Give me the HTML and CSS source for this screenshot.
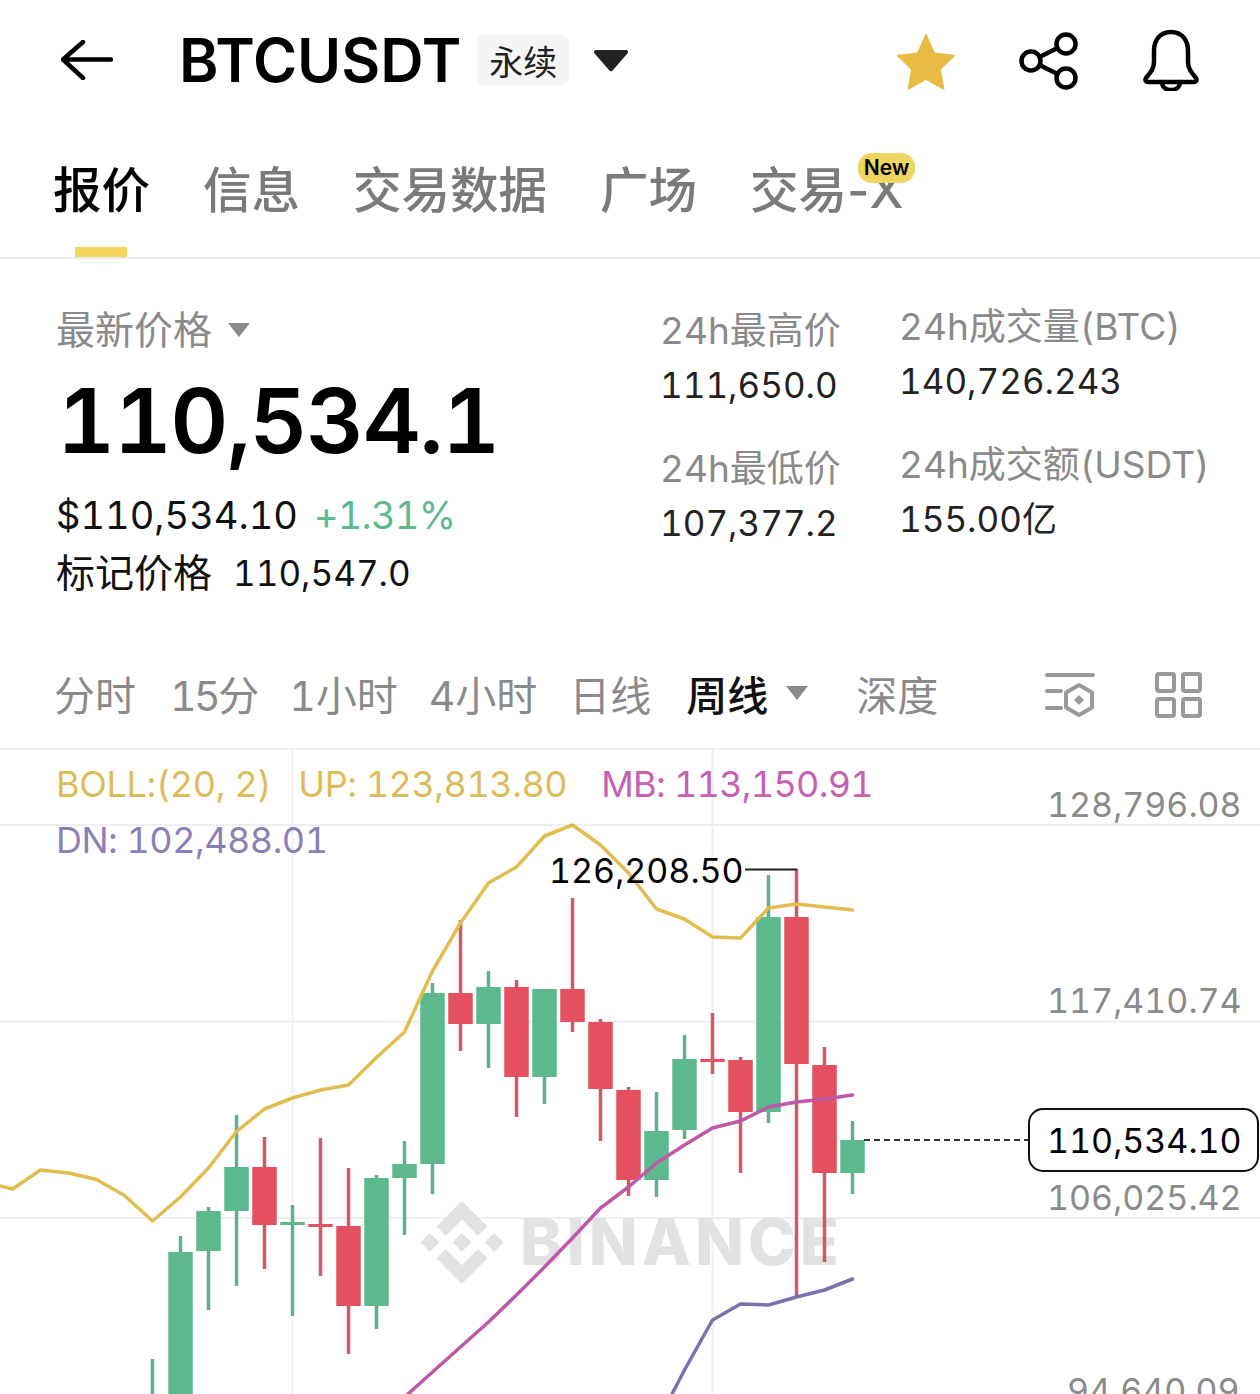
FILE: index.html
```html
<!DOCTYPE html>
<html lang="zh">
<head>
<meta charset="utf-8">
<title>BTCUSDT</title>
<link rel="stylesheet" href="styles.css">
</head>
<body>
<div class="page">
  <header class="topbar">
    <svg class="icon-back" viewBox="0 0 52 40"><path d="M50 19.5H3M22 2 2 19.5 22 38"/></svg>
    <h1 class="symbol">BTCUSDT</h1>
    <span class="tag">永续</span>
    <svg class="caret-big" viewBox="0 0 36 24"><path d="M3 2h30a2 2 0 0 1 1.6 3.2L19.6 22.6a2 2 0 0 1-3.2 0L1.4 5.2A2 2 0 0 1 3 2z"/></svg>
    <div class="top-actions">
      <svg class="icon-star" viewBox="0 0 60 57"><path d="M30 1 38.5 20 59 22.5 44.5 36.5 48 56.5 30 46.500 12 56.500 15.500 36.500 1 22.500 21.500 20z"/></svg>
      <svg class="icon-line icon-share" viewBox="0 0 60 60"><circle cx="12" cy="31" r="9.500"/><circle cx="47" cy="14" r="9.500"/><circle cx="47" cy="48" r="9.500"/><path d="M20.500 27 38.500 18M20.500 35 38.500 44"/></svg>
      <svg class="icon-line icon-bell" viewBox="0 0 58 62"><path d="M29 3C18 3 12 11 12 22v11c0 6-3 10-8 16-1.500 2-.5 4 2 4h46c2.500 0 3.500-2 2-4-5-6-8-10-8-16V22C46 11 40 3 29 3z"/><path d="M20 53c0 5 4 8 9 8s9-3 9-8"/></svg>
    </div>
  </header>

  <nav class="tabs">
    <a class="tab tab-active">报价</a>
    <a class="tab">信息</a>
    <a class="tab">交易数据</a>
    <a class="tab">广场</a>
    <a class="tab tab-new">交易-X<span class="badge">New</span></a>
  </nav>

  <section class="stats">
    <div class="price-col">
      <div class="price-label">最新价格<svg class="caret-small" viewBox="0 0 24 16"><path d="M1 1h22L12 15z"/></svg></div>
      <div class="price-main">110,534.1</div>
      <div class="price-sub"><span>$110,534.10</span><span class="up">+1.31%</span></div>
      <div class="price-mark"><span>标记价格</span><span class="mark-v">110,547.0</span></div>
    </div>
    <div class="stat-col stat-col-a">
      <div class="stat"><div class="stat-k">24h最高价</div><div class="stat-v">111,650.0</div></div>
      <div class="stat"><div class="stat-k">24h最低价</div><div class="stat-v">107,377.2</div></div>
    </div>
    <div class="stat-col stat-col-b">
      <div class="stat"><div class="stat-k">24h成交量(BTC)</div><div class="stat-v">140,726.243</div></div>
      <div class="stat"><div class="stat-k">24h成交额(USDT)</div><div class="stat-v">155.00亿</div></div>
    </div>
  </section>

  <nav class="periods">
    <a class="period p1">分时</a>
    <a class="period p2">15分</a>
    <a class="period p3">1小时</a>
    <a class="period p4">4小时</a>
    <a class="period p5">日线</a>
    <a class="period period-active">周线<svg class="caret-small" viewBox="0 0 24 16"><path d="M1 1h22L12 15z"/></svg></a>
    <a class="period p7">深度</a>
    <div class="period-tools">
      <svg class="tool tool-a" viewBox="0 0 50 46"><path d="M2 3h46M2 19h14M2 36h14"/><path d="M34 13 47 20.500V35.500L34 43 21 35.500V20.500z"/><path class="tool-fill" d="M34 23 39 28 34 33 29 28z"/></svg>
      <svg class="tool tool-b" viewBox="0 0 48 46"><rect x="2" y="2" width="17" height="17" rx="2"/><rect x="28" y="2" width="17" height="17" rx="2"/><rect x="2" y="27" width="17" height="17" rx="2"/><rect x="28" y="27" width="17" height="17" rx="2"/></svg>
    </div>
  </nav>

  <section class="chart">
    <svg class="chart-svg" viewBox="0 750 1260 644">
      <g class="grid">
        <path d="M0 825H1260M0 1021.500H1260M0 1218H1260M292.500 750V1394M712.500 750V1394"/>
      </g>
      <g class="watermark">
        <path transform="translate(420.500 1201) scale(3.46)" d="M16.624 13.9202l2.7175 2.7154-7.353 7.353-7.353-7.352 2.7175-2.7164 4.6355 4.6595 4.6356-4.6595zm4.6366-4.6366L24 12l-2.7154 2.7164L18.5682 12l2.6924-2.7164zm-9.272.001l2.7163 2.6914-2.7164 2.7174v-.001L9.2721 12l2.7164-2.7154zm-9.2722-.001L5.4088 12l-2.6914 2.6934L0 12l2.7164-2.7164zM11.9885.0115l7.353 7.329-2.7174 2.7154-4.6356-4.6356-4.6355 4.6595-2.7174-2.7154 7.353-7.353z"/>
        <text x="520" y="1265" class="wm-text">BINANCE</text>
      </g>
      <g class="wick-g">
        <path d="M152.500 1359V1394M180.500 1236V1394M208.500 1207V1310M236.500 1115V1286M292.500 1205V1316M376.500 1175V1329M404.500 1141V1235M432.500 983V1194M488.500 971V1068M544.500 989V1104M656.500 1092V1197M684.500 1035V1139M768.500 875V1123M852.500 1121V1194"/>
      </g>
      <g class="wick-r">
        <path d="M264.500 1137V1269M320.500 1138V1276M348.500 1168V1354M460.500 920V1051M516.500 980V1117M572.500 898V1032M600.500 1019V1141M628.500 1087V1196M712.500 1013V1074M740.500 1057V1173M796.500 869V1296M824.500 1047V1262"/>
      </g>
      <g class="body-g">
        <rect x="168.250" y="1252" width="24.500" height="142"/>
        <rect x="196.250" y="1211" width="24.500" height="40"/>
        <rect x="224.250" y="1167" width="24.500" height="44"/>
        <rect x="280.250" y="1222" width="24.500" height="3"/>
        <rect x="364.250" y="1178" width="24.500" height="128"/>
        <rect x="392.250" y="1164" width="24.500" height="14"/>
        <rect x="420.250" y="993" width="24.500" height="171"/>
        <rect x="476.250" y="987" width="24.500" height="37"/>
        <rect x="532.250" y="989" width="24.500" height="88"/>
        <rect x="644.250" y="1131" width="24.500" height="49"/>
        <rect x="672.250" y="1059" width="24.500" height="71"/>
        <rect x="756.250" y="917" width="24.500" height="195"/>
        <rect x="840.250" y="1140" width="24.500" height="33"/>
      </g>
      <g class="body-r">
        <rect x="252.250" y="1167" width="24.500" height="58"/>
        <rect x="308.250" y="1224" width="24.500" height="3"/>
        <rect x="336.250" y="1226" width="24.500" height="80"/>
        <rect x="448.250" y="993" width="24.500" height="31"/>
        <rect x="504.250" y="987" width="24.500" height="90"/>
        <rect x="560.250" y="989" width="24.500" height="33"/>
        <rect x="588.250" y="1022" width="24.500" height="67"/>
        <rect x="616.250" y="1090" width="24.500" height="90"/>
        <rect x="700.250" y="1059" width="24.500" height="3"/>
        <rect x="728.250" y="1060" width="24.500" height="52"/>
        <rect x="784.250" y="917" width="24.500" height="147"/>
        <rect x="812.250" y="1065" width="24.500" height="108"/>
      </g>
      <polyline class="line line-up" points="0,1186 12.500,1189 40.500,1170 68.500,1173 96.500,1179.500 124.500,1195.500 152.500,1221 180.500,1197 208.500,1168 236.500,1131.500 264.500,1109 292.500,1098 320.500,1090 348.500,1085 376.500,1057.500 404.500,1032 432.500,971 460.500,923 488.500,883 516.500,867 544.500,836 572.500,825 600.500,845 628.500,873 656.500,909 684.500,919 712.500,937 740.500,938 768.500,908 796.500,904 824.500,907 852.500,910"/>
      <polyline class="line line-mb" points="408,1394 432.500,1372 460.500,1347 488.500,1322 516.500,1295 544.500,1267 572.500,1238 600.500,1208 628.500,1187 656.500,1163 684.500,1145 712.500,1128 740.500,1121 768.500,1107 796.500,1102 824.500,1099 852.500,1095"/>
      <polyline class="line line-dn" points="672,1394 684.500,1370 712.500,1320 740.500,1304 768.500,1305 796.500,1297 824.500,1290 852.500,1279"/>
      <path class="leader" d="M745 869.500H797"/>
      <path class="dash" d="M864 1140H1028"/>
      <text class="peak" x="549" y="883">126,208.50</text>
      <text class="axis" x="1047" y="817">128,796.08</text>
      <text class="axis" x="1047" y="1013">117,410.74</text>
      <text class="axis" x="1047" y="1210">106,025.42</text>
      <text class="axis" x="1067" y="1403">94,640.09</text>
      <rect class="now-box" x="1029" y="1109" width="229" height="62" rx="14"/>
      <text class="now" x="1047" y="1153">110,534.10</text>
    </svg>
    <div class="legend">
      <div class="legend-row"><span class="c-boll">BOLL:(20, 2)</span><span class="c-up">UP: 123,813.80</span><span class="c-mb">MB: 113,150.91</span></div>
      <div class="legend-row"><span class="c-dn">DN: 102,488.01</span></div>
    </div>
  </section>
</div>
</body>
</html>
```
FILE: styles.css
```css
* { box-sizing: border-box; }
html, body { margin: 0; padding: 0; background: #fff; }
body {
  font-family: Inter, "Noto Sans CJK SC", sans-serif;
  font-variant-numeric: tabular-nums;
  color: #000;
}
.page { width: 1260px; height: 1394px; overflow: hidden; background: #fff; }

/* top bar */
.topbar { height: 120px; display: flex; align-items: center; padding-left: 61px; }
.icon-back { width: 52px; height: 40px; flex: none; }
.icon-back path { fill: none; stroke: #000; stroke-width: 4.5; stroke-linecap: round; stroke-linejoin: round; }
.symbol { margin: 0 0 0 66px; font-size: 60px; font-weight: 600; line-height: 1; }
.tag {
  margin-left: 16px; width: 92px; height: 50px; border-radius: 7px; background: #f5f5f5;
  display: flex; align-items: center; justify-content: center;
  font-size: 34px; color: #222;
}
.caret-big { width: 36px; height: 24px; margin-left: 24px; fill: #222; }
.top-actions { margin-left: auto; margin-right: 60px; display: flex; align-items: center; gap: 63px; }
.icon-star { width: 60px; height: 57px; fill: #e8bc42; stroke: #e8bc42; stroke-width: 1; stroke-linejoin: round; margin-top: 2px; }
.icon-line { fill: none; stroke: #000; stroke-width: 4.500; stroke-linecap: round; stroke-linejoin: round; }
.icon-share { width: 60px; height: 60px; }
.icon-bell { width: 58px; height: 62px; }

/* tabs */
.tabs { height: 139px; display: flex; gap: 53px; padding: 36px 0 0 53px; border-bottom: 2px solid #ececec; }
.tab { position: relative; font-size: 48.500px; line-height: 70px; height: 70px; font-weight: 500; color: #7a7a7a; white-space: nowrap; font-variant-numeric: normal; }
.tab-active { color: #000; }
.tab-active::after { content: ""; position: absolute; left: 22px; top: 91px; width: 52px; height: 10px; background: #f2d55e; }
.badge {
  position: absolute; left: 108px; top: -3px; width: 57px; height: 30px; border-radius: 14px;
  background: #f2d55e; color: #000; font-size: 21px; font-weight: 600; line-height: 30px; text-align: center;
}

/* stats */
.stats { height: 381px; display: flex; padding-top: 46px; color: #8a8a8a; }
.price-col { width: 660px; padding-left: 56px; }
.price-label { font-size: 39px; line-height: 50px; display: flex; align-items: center; color: #8a8a8a; }
.caret-small { width: 24px; height: 16px; fill: #8a8a8a; margin-left: 15px; flex: none; }
.price-main { margin: 10px 0 0 1px; font-size: 90px; font-weight: 600; color: #000; line-height: 112px; letter-spacing: -1.600px; }
.price-sub { margin-top: 13px; display: flex; gap: 16px; font-size: 38px; line-height: 50px; color: #111; }
.up { color: #5fb98f; letter-spacing: -.800px; }
.price-mark { margin-top: 8px; display: flex; align-items: center; gap: 21px; font-size: 39px; line-height: 50px; color: #111; }
.mark-v { font-size: 35px; }
.stat-col { display: flex; flex-direction: column; margin-top: -2px; }
.stat-col-a { width: 239px; gap: 28px; }
.stat-col-b { gap: 28px; margin-top: -6px; }
.stat-k { font-size: 37px; line-height: 55px; color: #8a8a8a; white-space: nowrap; }
.stat-v { font-size: 35px; line-height: 55px; color: #222; white-space: nowrap; }

/* period bar */
.periods { height: 110px; display: flex; align-items: center; padding: 0 0 2px 54px; border-bottom: 2px solid #f0f0f0; color: #8a8a8a; font-size: 41px; position: relative; }
.period { white-space: nowrap; }
.p2 { margin-left: 34px; letter-spacing: -2.500px; }
.p3 { margin-left: 32.500px; }
.p4 { margin-left: 31px; }
.p5 { margin-left: 32px; }
.period-active { margin-left: 35px; color: #111; font-weight: 500; display: flex; align-items: center; }
.period-active .caret-small { margin-left: 17px; }
.p7 { margin-left: 47px; }
.period-tools { margin-left: auto; margin-right: 57px; display: flex; align-items: center; gap: 60px; padding-top: 4px; }
.tool { fill: none; stroke: #999; stroke-width: 4; stroke-linecap: round; stroke-linejoin: round; }
.tool-a { width: 50px; height: 46px; }
.tool-b { width: 48px; height: 46px; }
.tool-fill { fill: #999; stroke: none; }

/* chart */
.chart { position: relative; height: 644px; overflow: hidden; }
.chart-svg { display: block; width: 1260px; height: 644px; }
.grid path { fill: none; stroke: #efefef; stroke-width: 2; }
.watermark { fill: #e2e2e2; }
.wm-text { font-family: Inter, sans-serif; font-size: 64px; font-weight: 800; letter-spacing: 4px; }
.wick-g path { fill: none; stroke: #5fae8c; stroke-width: 3.500; }
.wick-r path { fill: none; stroke: #cf5a68; stroke-width: 3.500; }
.body-g { fill: #5cb88d; }
.body-r { fill: #e5505f; }
.line { fill: none; stroke-width: 3.500; stroke-linejoin: round; stroke-linecap: round; }
.line-up { stroke: #e0bd4e; }
.line-mb { stroke: #bf58a8; }
.line-dn { stroke: #7c70ae; }
.leader { fill: none; stroke: #222; stroke-width: 2; }
.dash { fill: none; stroke: #333; stroke-width: 2; stroke-dasharray: 6 4; }
.peak { font-size: 34px; fill: #000; }
.axis { font-size: 34px; fill: #8a8a8a; }
.now { font-size: 34px; fill: #000; }
.now-box { fill: #fff; stroke: #111; stroke-width: 2; }
.legend { position: absolute; left: 56px; top: 6px; font-size: 36px; line-height: 56px; letter-spacing: -.450px; }
.legend-row { display: flex; gap: 27px; }
.c-boll { color: #dcbc5a; letter-spacing: -.300px; }
.c-up { color: #dcbc5a; }
.c-mb { color: #c660b2; margin-left: 7px; letter-spacing: -.700px; }
.c-dn { color: #8c7fb8; letter-spacing: -.500px; }
```
